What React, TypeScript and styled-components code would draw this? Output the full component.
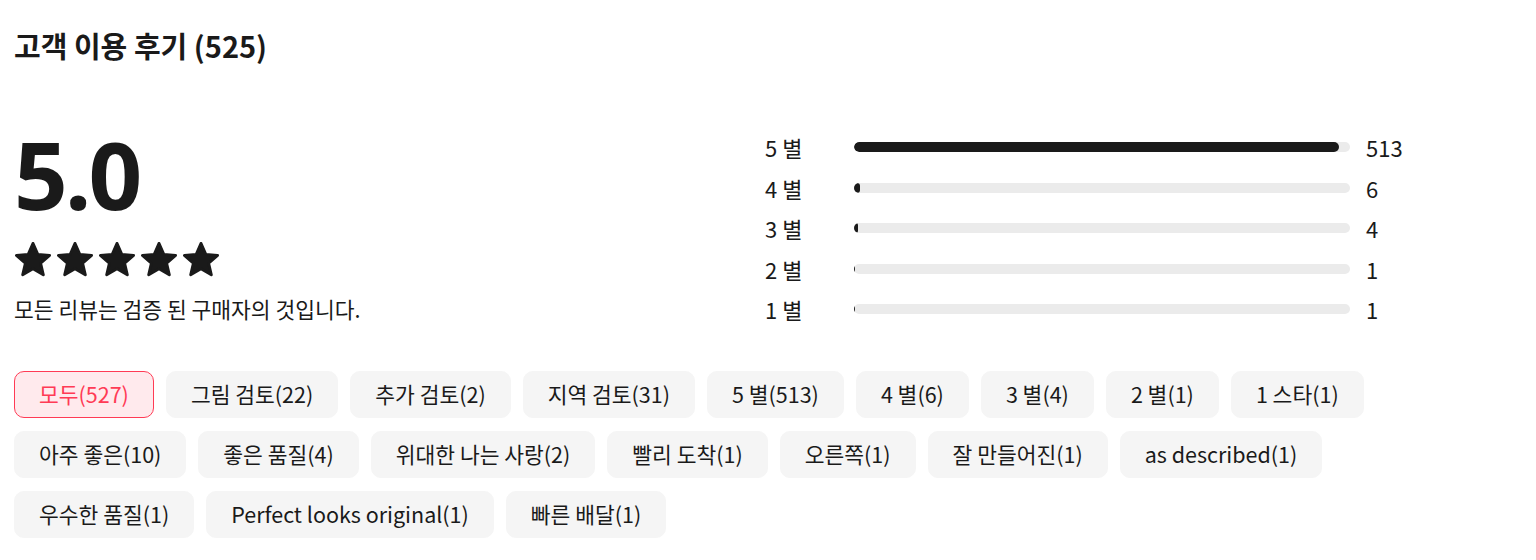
import React from 'react';
import styled, { createGlobalStyle } from 'styled-components';

const GlobalStyle = createGlobalStyle`
  body {
    margin: 0;
    background: #fff;
    font-family: 'Noto Sans CJK KR', 'Open Sans', sans-serif;
    color: #1a1a1a;
  }
`;

const Page = styled.div`
  padding: 29px 14px 0;
`;

const Title = styled.h2`
  margin: 0;
  font-size: 29px;
  line-height: 32px;
  font-weight: 700;
`;

const Summary = styled.div`
  display: grid;
  grid-template-columns: 751px 1fr;
  margin-top: 66px;
`;

const ScoreColumn = styled.div`
  display: flex;
  flex-direction: column;
  align-items: flex-start;
`;

const Score = styled.div`
  font-family: 'Open Sans', sans-serif;
  font-size: 94px;
  line-height: 1;
  font-weight: 700;
  letter-spacing: -3px;
`;

const Stars = styled.div`
  display: flex;
  gap: 6px;
  margin-top: 21px;
  margin-left: 1px;
`;

const Note = styled.p`
  margin: 18px 0 0;
  font-size: 21.5px;
  line-height: 26px;
`;

const Breakdown = styled.div`
  display: flex;
  flex-direction: column;
`;

const Row = styled.div`
  display: grid;
  grid-template-columns: 89px 496px auto;
  align-items: center;
  height: 40.5px;
  font-size: 22px;
`;

const Count = styled.span`
  margin-left: 16px;
`;

const Track = styled.div`
  height: 10px;
  border-radius: 5px;
  background: #ebebeb;
  overflow: hidden;
`;

const Fill = styled.div`
  height: 100%;
  border-radius: 5px;
  background: #1a1a1a;
`;

const Chips = styled.div`
  display: flex;
  flex-wrap: wrap;
  gap: 13px 12px;
  max-width: 1480px;
  margin-top: 41px;
`;

const Chip = styled.button<{ $active?: boolean }>`
  height: 47px;
  padding: 0 24px;
  border-radius: 10px;
  border: 1px solid ${p => (p.$active ? '#ff3b55' : '#f5f5f5')};
  background: ${p => (p.$active ? '#ffeaed' : '#f5f5f5')};
  color: ${p => (p.$active ? '#ff3b55' : '#1a1a1a')};
  font-family: inherit;
  font-size: 21.5px;
  line-height: 24px;
  cursor: pointer;
`;

const Star = () => (
  <svg width="36" height="36" viewBox="1.9 1.8 20.2 20.2">
    <path
      d="M12 2.6l2.7 6.1 6.6.6-5 4.4 1.5 6.5L12 16.8l-5.8 3.4 1.5-6.5-5-4.4 6.6-.6z"
      fill="#1a1a1a"
      stroke="#1a1a1a"
      strokeWidth="1.6"
      strokeLinejoin="round"
    />
  </svg>
);

const ratings = [
  { label: '5 별', count: 513 },
  { label: '4 별', count: 6 },
  { label: '3 별', count: 4 },
  { label: '2 별', count: 1 },
  { label: '1 별', count: 1 },
];

const total = 525;

const filters = [
  '모두(527)',
  '그림 검토(22)',
  '추가 검토(2)',
  '지역 검토(31)',
  '5 별(513)',
  '4 별(6)',
  '3 별(4)',
  '2 별(1)',
  '1 스타(1)',
  '아주 좋은(10)',
  '좋은 품질(4)',
  '위대한 나는 사랑(2)',
  '빨리 도착(1)',
  '오른쪽(1)',
  '잘 만들어진(1)',
  'as described(1)',
  '우수한 품질(1)',
  'Perfect looks original(1)',
  '빠른 배달(1)',
];

const App = () => (
  <Page>
    <GlobalStyle />
    <Title>고객 이용 후기 (525)</Title>
    <Summary>
      <ScoreColumn>
        <Score>5.0</Score>
        <Stars>
          {[0, 1, 2, 3, 4].map(i => (
            <Star key={i} />
          ))}
        </Stars>
        <Note>모든 리뷰는 검증 된 구매자의 것입니다.</Note>
      </ScoreColumn>
      <Breakdown>
        {ratings.map(r => (
          <Row key={r.label}>
            <span>{r.label}</span>
            <Track>
              <Fill style={{ width: `${Math.max((r.count / total) * 100, 0.2)}%` }} />
            </Track>
            <Count>{r.count}</Count>
          </Row>
        ))}
      </Breakdown>
    </Summary>
    <Chips>
      {filters.map((f, i) => (
        <Chip key={f} $active={i === 0}>
          {f}
        </Chip>
      ))}
    </Chips>
  </Page>
);

export default App;
